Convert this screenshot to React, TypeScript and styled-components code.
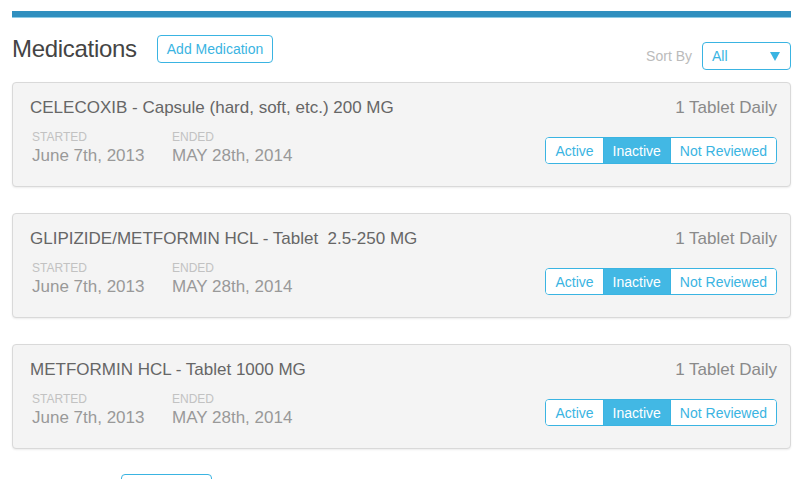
import React, { useState } from 'react';
import styled, { createGlobalStyle } from 'styled-components';

type Status = 'Active' | 'Inactive' | 'Not Reviewed';

type Medication = {
  name: string;
  dose: string;
  started: string;
  ended: string;
  status: Status;
};

const medications: Medication[] = [
  {
    name: 'CELECOXIB - Capsule (hard, soft, etc.) 200 MG',
    dose: '1 Tablet Daily',
    started: 'June 7th, 2013',
    ended: 'MAY 28th, 2014',
    status: 'Inactive',
  },
  {
    name: 'GLIPIZIDE/METFORMIN HCL - Tablet\u00a0 2.5-250 MG',
    dose: '1 Tablet Daily',
    started: 'June 7th, 2013',
    ended: 'MAY 28th, 2014',
    status: 'Inactive',
  },
  {
    name: 'METFORMIN HCL - Tablet 1000 MG',
    dose: '1 Tablet Daily',
    started: 'June 7th, 2013',
    ended: 'MAY 28th, 2014',
    status: 'Inactive',
  },
];

const statuses: Status[] = ['Active', 'Inactive', 'Not Reviewed'];

const MedicationCard = ({ med }: { med: Medication }) => {
  const [status, setStatus] = useState<Status>(med.status);

  return (
    <Card>
      <CardTop>
        <MedName>{med.name}</MedName>
        <Dose>{med.dose}</Dose>
      </CardTop>
      <CardBottom>
        <Dates>
          <DateBlock>
            <DateLabel>Started</DateLabel>
            <DateValue>{med.started}</DateValue>
          </DateBlock>
          <DateBlock>
            <DateLabel>Ended</DateLabel>
            <DateValue>{med.ended}</DateValue>
          </DateBlock>
        </Dates>
        <Segmented>
          {statuses.map((s) => (
            <Segment key={s} $selected={s === status} onClick={() => setStatus(s)}>
              {s}
            </Segment>
          ))}
        </Segmented>
      </CardBottom>
    </Card>
  );
};

const App = () => {
  return (
    <>
      <GlobalStyle />
      <Page>
        <TopBar />
        <SectionHeader>
          <TitleGroup>
            <Title>Medications</Title>
            <OutlineButton>Add Medication</OutlineButton>
          </TitleGroup>
          <SortGroup>
            <SortLabel>Sort By</SortLabel>
            <Select>
              <span>All</span>
              <Caret viewBox='0 0 10 9' width={10} height={9}>
                <path d='M0 0 H10 L5 9 Z' fill='#3ab4e2' />
              </Caret>
            </Select>
          </SortGroup>
        </SectionHeader>
        <CardList>
          {medications.map((m) => (
            <MedicationCard key={m.name} med={m} />
          ))}
        </CardList>
        <SectionHeader $spaced>
          <TitleGroup>
            <Title>Allergies</Title>
            <OutlineButton>Add Allergy</OutlineButton>
          </TitleGroup>
        </SectionHeader>
      </Page>
    </>
  );
};

export default App;

const GlobalStyle = createGlobalStyle`
  body {
    margin: 0;
    background: #ffffff;
    font-family: "Liberation Sans", Arial, sans-serif;
    overflow: hidden;
  }
`;

const Page = styled.div`
  padding: 11px 14px 0 12px;
`;

const TopBar = styled.div`
  height: 6px;
  background: #2f8fbf;
  border-bottom: 1px solid #8ccbe6;
`;

const SectionHeader = styled.div<{ $spaced?: boolean }>`
  display: flex;
  justify-content: space-between;
  align-items: flex-start;
  margin-top: ${({ $spaced }) => ($spaced ? '25px' : '17px')};
  height: 36px;
`;

const TitleGroup = styled.div`
  display: flex;
  align-items: center;
  gap: 20px;
`;

const Title = styled.h2`
  margin: 0;
  font-size: 24px;
  line-height: 24px;
  font-weight: 400;
  color: #444444;
  letter-spacing: -0.3px;
`;

const OutlineButton = styled.button`
  height: 28px;
  padding: 0 9px;
  border: 1px solid #3ab4e2;
  border-radius: 4px;
  background: #ffffff;
  color: #3ab4e2;
  font-family: inherit;
  font-size: 14px;
  cursor: pointer;
`;

const SortGroup = styled.div`
  display: flex;
  align-items: center;
  gap: 10px;
  margin-top: 7px;
`;

const SortLabel = styled.span`
  font-size: 14px;
  color: #bbbbbb;
`;

const Select = styled.div`
  width: 89px;
  height: 28px;
  box-sizing: border-box;
  border: 1px solid #3ab4e2;
  border-radius: 4px;
  display: flex;
  align-items: center;
  justify-content: space-between;
  padding: 0 10px 0 9px;
  font-size: 14px;
  color: #3ab4e2;
`;

const Caret = styled.svg`
  display: block;
`;

const CardList = styled.div`
  display: flex;
  flex-direction: column;
  gap: 26px;
  margin-top: 11px;
`;

const Card = styled.div`
  height: 105px;
  box-sizing: border-box;
  background: #f4f4f4;
  border: 1px solid #d9d9d9;
  border-radius: 4px;
  box-shadow: 0 1px 2px rgba(0, 0, 0, 0.08);
  padding: 15px 13px 0 17px;
`;

const CardTop = styled.div`
  display: flex;
  justify-content: space-between;
  align-items: baseline;
`;

const MedName = styled.div`
  font-size: 17px;
  color: #666666;
`;

const Dose = styled.div`
  font-size: 17px;
  color: #8a8a8a;
`;

const CardBottom = styled.div`
  display: flex;
  justify-content: space-between;
  align-items: flex-start;
  margin-top: 12px;
`;

const Dates = styled.div`
  display: flex;
  gap: 22px;
  padding-left: 2px;
`;

const DateBlock = styled.div`
  display: flex;
  flex-direction: column;
  min-width: 118px;
`;

const DateLabel = styled.span`
  font-size: 12px;
  line-height: 14px;
  color: #c2c2c2;
  text-transform: uppercase;
`;

const DateValue = styled.span`
  font-size: 17px;
  line-height: 23px;
  color: #999999;
`;

const Segmented = styled.div`
  display: flex;
  height: 27px;
  box-sizing: border-box;
  border: 1px solid #3ab4e2;
  border-radius: 4px;
  overflow: hidden;
  background: #ffffff;
  margin-top: 7px;
`;

const Segment = styled.button<{ $selected: boolean }>`
  border: none;
  border-left: 1px solid #3ab4e2;
  padding: 0 9px;
  font-family: inherit;
  font-size: 14px;
  cursor: pointer;
  background: ${({ $selected }) => ($selected ? '#42b8e4' : '#ffffff')};
  color: ${({ $selected }) => ($selected ? '#ffffff' : '#3ab4e2')};

  &:first-child {
    border-left: none;
  }
`;
